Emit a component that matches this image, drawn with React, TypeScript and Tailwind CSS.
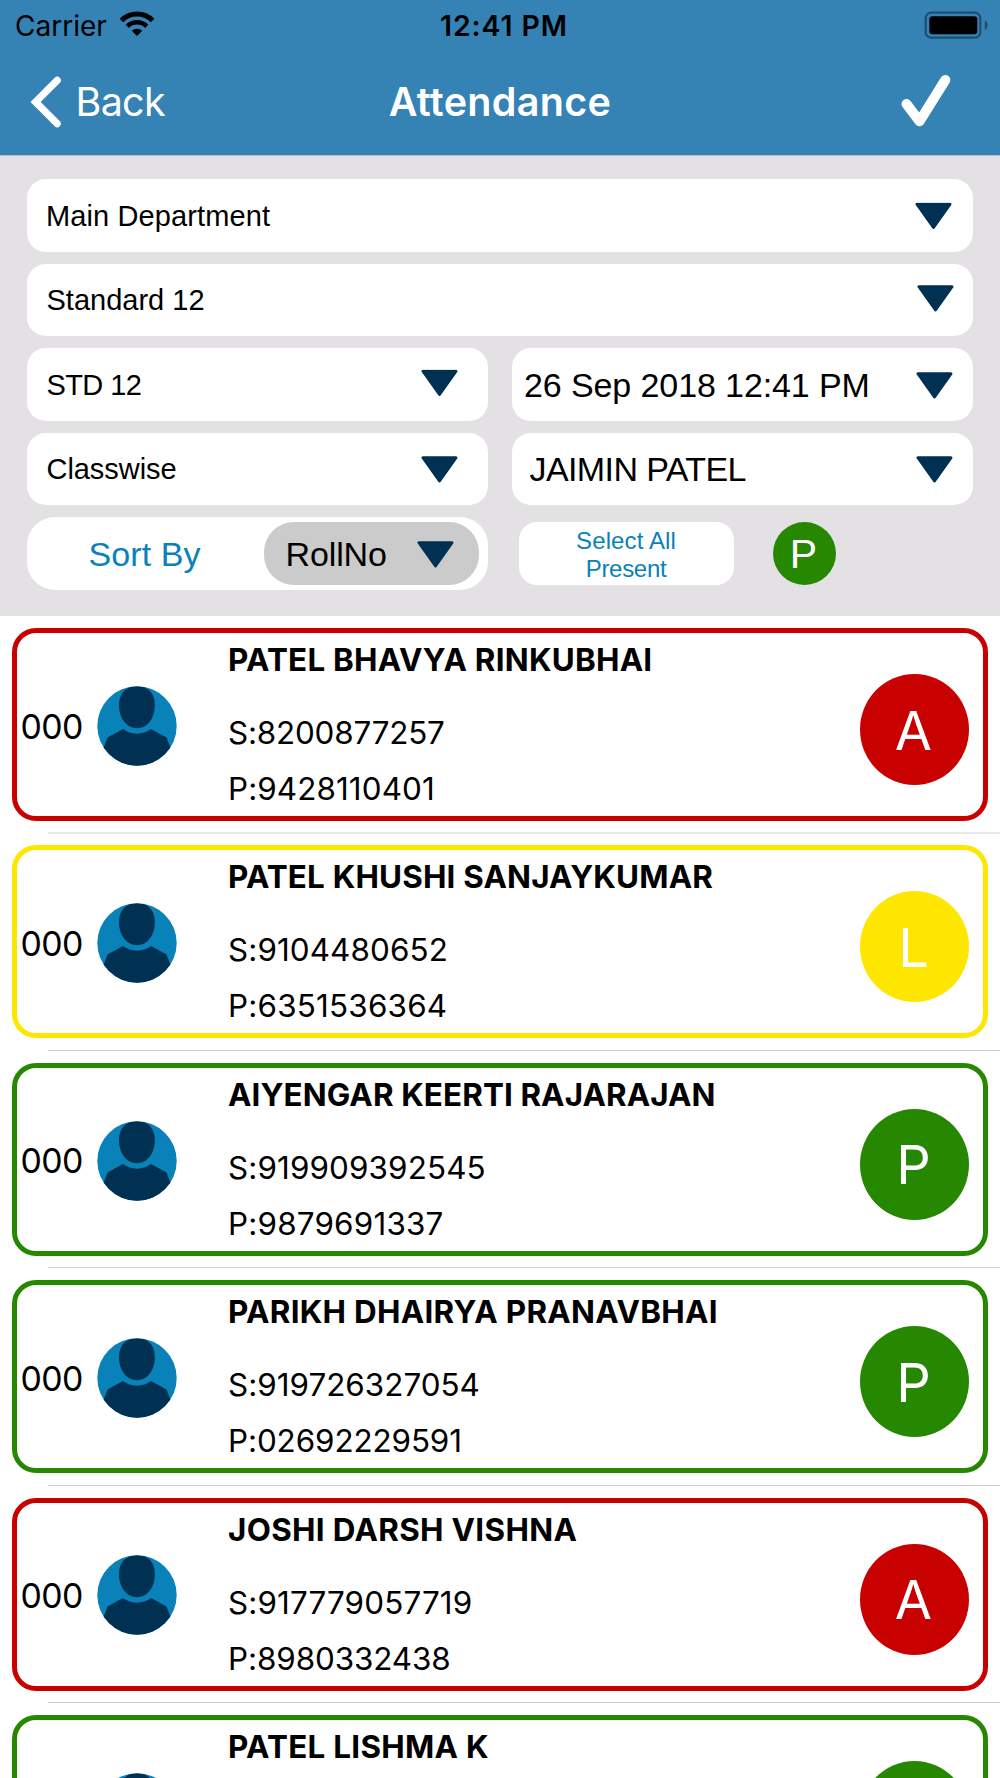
import React from "react";
import clsx from "clsx";

type Status = "A" | "L" | "P";

interface Student {
  name: string;
  student?: string;
  parent?: string;
  status: Status;
  nameClass: string;
  studentClass?: string;
  parentClass?: string;
}

const students: Student[] = [
  { name: "PATEL BHAVYA RINKUBHAI", student: "8200877257", parent: "9428110401", status: "A", nameClass: "tracking-[0.25px]", studentClass: "tracking-[-0.19px]", parentClass: "tracking-[0.1px]" },
  { name: "PATEL KHUSHI SANJAYKUMAR", student: "9104480652", parent: "6351536364", status: "L", nameClass: "tracking-[0.18px]", studentClass: "tracking-[0.1px]", parentClass: "tracking-[0.2px]" },
  { name: "AIYENGAR KEERTI RAJARAJAN", student: "919909392545", parent: "9879691337", status: "P", nameClass: "tracking-[0.1px]", studentClass: "tracking-[0.12px]", parentClass: "tracking-[0.2px]" },
  { name: "PARIKH DHAIRYA PRANAVBHAI", student: "919726327054", parent: "02692229591", status: "P", nameClass: "tracking-[0.29px]", studentClass: "tracking-[0.02px]", parentClass: "tracking-[-0.1px]" },
  { name: "JOSHI DARSH VISHNA", student: "917779057719", parent: "8980332438", status: "A", nameClass: "tracking-[0.33px]", studentClass: "tracking-[0.14px]", parentClass: "tracking-[-0.09px]" },
  { name: "PATEL LISHMA K", status: "P", nameClass: "tracking-[0.29px]" },
];

const borderColor: Record<Status, string> = {
  A: "border-[#c80000]",
  L: "border-[#ffe600]",
  P: "border-[#268700]",
};

const fillColor: Record<Status, string> = {
  A: "bg-[#c80000]",
  L: "bg-[#ffe600]",
  P: "bg-[#268700]",
};

function Arrow({ className }: { className?: string }) {
  return (
    <svg viewBox="0 0 37 27" className={clsx("h-[27px] w-[37px] shrink-0", className)}>
      <path d="M2 1.7H35L18.5 25Z" fill="#003153" stroke="#003153" strokeWidth="3" strokeLinejoin="round" />
    </svg>
  );
}

function Field({ text, textClass, arrowClass }: { text: string; textClass: string; arrowClass: string }) {
  return (
    <div className="flex h-[72.5px] items-center justify-between rounded-[19px] bg-white">
      <span className={clsx("whitespace-nowrap", textClass)}>{text}</span>
      <Arrow className={arrowClass} />
    </div>
  );
}

function Avatar() {
  return (
    <svg viewBox="0 0 80 80" className="size-[80px] shrink-0">
      <defs>
        <clipPath id="avatar-circle">
          <circle cx="40" cy="40" r="39.7" />
        </clipPath>
      </defs>
      <g clipPath="url(#avatar-circle)">
        <rect width="80" height="80" fill="#0882b8" />
        <path d="M40 0.3C51 0.3 57.8 7 57.8 19C57.8 33 50 42.2 40 42.2C30 42.2 22 33 22 19C22 7 29 0.3 40 0.3Z" fill="#003153" />
        <path d="M26 43C34 49.2 46 49.2 54 43L69.5 51.5L75 66V80H5V66L10.5 51.5Z" fill="#003153" />
      </g>
    </svg>
  );
}

function StudentRow({ item }: { item: Student }) {
  return (
    <li className="group flex h-[217.4px] shrink-0 flex-col pt-[12px] font-[Inter,sans-serif] text-black">
      <article className={clsx("mx-[12px] flex h-[193px] shrink-0 items-center rounded-[24px] border-[5px] bg-white", borderColor[item.status])}>
        <span className="w-[79.5px] shrink-0 pt-[4px] pl-[3.5px] text-[33.8px] leading-[40px] tracking-[-0.6px]">000</span>
        <span className="pt-[2.5px]">
          <Avatar />
        </span>
        <div className="ml-[51.5px] flex h-full grow flex-col pt-[1px] text-[31.4px] whitespace-nowrap">
          <h2 className={clsx("leading-[53px] font-bold", item.nameClass)}>{item.name}</h2>
          {item.student && <p className={clsx("mt-[18px] leading-[56px]", item.studentClass)}>S:{item.student}</p>}
          {item.parent && <p className={clsx("leading-[56px]", item.parentClass)}>P:{item.parent}</p>}
        </div>
        <div className={clsx("mt-[10px] mr-[14px] flex h-[111px] w-[109px] shrink-0 items-center justify-center rounded-[50%] pt-[2px] pr-[2px] text-[54px] leading-none text-white", fillColor[item.status])}>
          {item.status}
        </div>
      </article>
      <div className="mt-[11.5px] ml-[48px] h-px shrink-0 bg-[#cfced1] group-first:mt-[11px] group-first:h-[2px] group-first:bg-[#e8e8e8]" />
    </li>
  );
}

export default function App() {
  return (
    <main className="flex h-[1778px] w-[1000px] flex-col overflow-hidden bg-white font-['Liberation_Sans',Arial,sans-serif]">
      <header className="h-[156px] shrink-0 border-b border-[#b9bcc4] bg-[#3582b4] font-[Inter,sans-serif]">
        <div className="grid h-[50px] grid-cols-3 items-center text-[28px] leading-[34px] text-black">
          <div className="flex items-center gap-[12.5px] pl-[15px]">
            <span className="pt-[2px]">Carrier</span>
            <svg viewBox="0 0 36 26" className="-mt-[2px] h-[26px] w-[36px]">
              <g fill="none" stroke="#000">
                <path d="M2.4 9.4A22 22 0 0 1 33.6 9.4" strokeWidth="5" />
                <path d="M8.3 15.3A13.8 13.8 0 0 1 27.7 15.3" strokeWidth="4.6" />
              </g>
              <path d="M18 25L12.8 19.8A7.4 7.4 0 0 1 23.2 19.8Z" fill="#000" />
            </svg>
          </div>
          <span className="pt-[2px] pl-[8px] text-center text-[28.5px] font-semibold tracking-[0.9px]">12:41 PM</span>
          <svg viewBox="0 0 64 28" className="mr-[12px] -mt-[1px] h-[28px] w-[64px] justify-self-end">
            <rect x="1.7" y="1.7" width="54.6" height="25" rx="5.5" fill="none" stroke="#1f4f6f" strokeWidth="2.2" />
            <rect x="5.3" y="5.2" width="48" height="18" rx="3" fill="#000" />
            <path d="M60.8 9.3C64.6 11.5 64.6 16.9 60.8 19.1Z" fill="#1f4f6f" />
          </svg>
        </div>
        <nav className="grid h-[102px] grid-cols-3 items-center text-[39.5px] leading-[48px] text-white">
          <div className="flex items-center pl-[30px]">
            <svg viewBox="0 0 32 52" className="mt-[2px] h-[52px] w-[32px]">
              <path d="M27.2 4.4L5.6 26L27.2 47.6" fill="none" stroke="#fff" strokeWidth="7.2" strokeLinecap="round" />
            </svg>
            <span className="ml-[13.5px] pt-[2px] tracking-[-0.7px]">Back</span>
          </div>
          <h1 className="pt-[2px] text-center font-semibold tracking-[0.3px]">Attendance</h1>
          <svg viewBox="0 0 50 52" className="mr-[49px] h-[52px] w-[50px] justify-self-end">
            <path d="M5.5 29L18.5 46.3L44.3 5" fill="none" stroke="#fff" strokeWidth="10" strokeLinecap="round" strokeLinejoin="round" />
          </svg>
        </nav>
      </header>

      <section className="flex h-[460px] shrink-0 flex-col gap-[12px] bg-[#e3e1e4] px-[27px] pt-[23px] text-black">
        <Field text="Main Department" textClass="pl-[19px] text-[29px] tracking-[0.12px] pt-[2px]" arrowClass="mr-[21px] translate-y-[0.5px]" />
        <Field text="Standard 12" textClass="pl-[19.5px] text-[29px] pt-[1px]" arrowClass="mr-[19px] -translate-y-[1px]" />
        <div className="grid grid-cols-2 gap-x-[24px] gap-y-[12px]">
          <Field text="STD 12" textClass="pl-[19.5px] text-[29px] tracking-[-0.6px] pt-[2px]" arrowClass="mr-[30.5px] -translate-y-[1.5px]" />
          <Field text="26 Sep 2018 12:41 PM" textClass="pl-[12px] text-[34px] tracking-[-0.1px] pt-[2px]" arrowClass="mr-[20px] translate-y-[1px]" />
          <Field text="Classwise" textClass="pl-[19.5px] text-[29px] tracking-[-0.05px] pt-[2px]" arrowClass="mr-[30.5px] translate-y-[1px]" />
          <Field text="JAIMIN PATEL" textClass="pl-[17.5px] text-[34px] tracking-[-0.6px] pt-[2px]" arrowClass="mr-[20px] translate-y-[1px]" />
          <div className="flex h-[72.5px] items-center justify-between rounded-[28px] bg-white pr-[9.5px] pl-[61.5px]">
            <span className="pt-[2px] text-[34px] tracking-[0.09px] text-[#0882b8]">Sort By</span>
            <div className="flex h-[63px] w-[215px] items-center justify-between rounded-[30px] bg-[#cbcbcb] pr-[25px] pl-[22px]">
              <span className="pt-[3px] text-[34px] tracking-[-0.12px]">RollNo</span>
              <Arrow className="translate-y-[1px]" />
            </div>
          </div>
          <div className="flex items-center pl-[7px]">
            <div className="flex h-[63px] w-[215px] flex-col items-center justify-center rounded-[18px] bg-white pt-[3px] pr-[1px] text-[24px] leading-[27.5px] text-[#0882b8]">
              <span className="tracking-[0.12px]">Select All</span>
              <span className="tracking-[-0.3px]">Present</span>
            </div>
            <div className="ml-[39px] flex size-[63px] items-center justify-center rounded-full bg-[#268700] pt-[2px] pr-[2px] text-[41px] leading-none text-white">P</div>
          </div>
        </div>
      </section>

      <ul className="flex flex-col">
        {students.map((s) => (
          <StudentRow key={s.name} item={s} />
        ))}
      </ul>
    </main>
  );
}
